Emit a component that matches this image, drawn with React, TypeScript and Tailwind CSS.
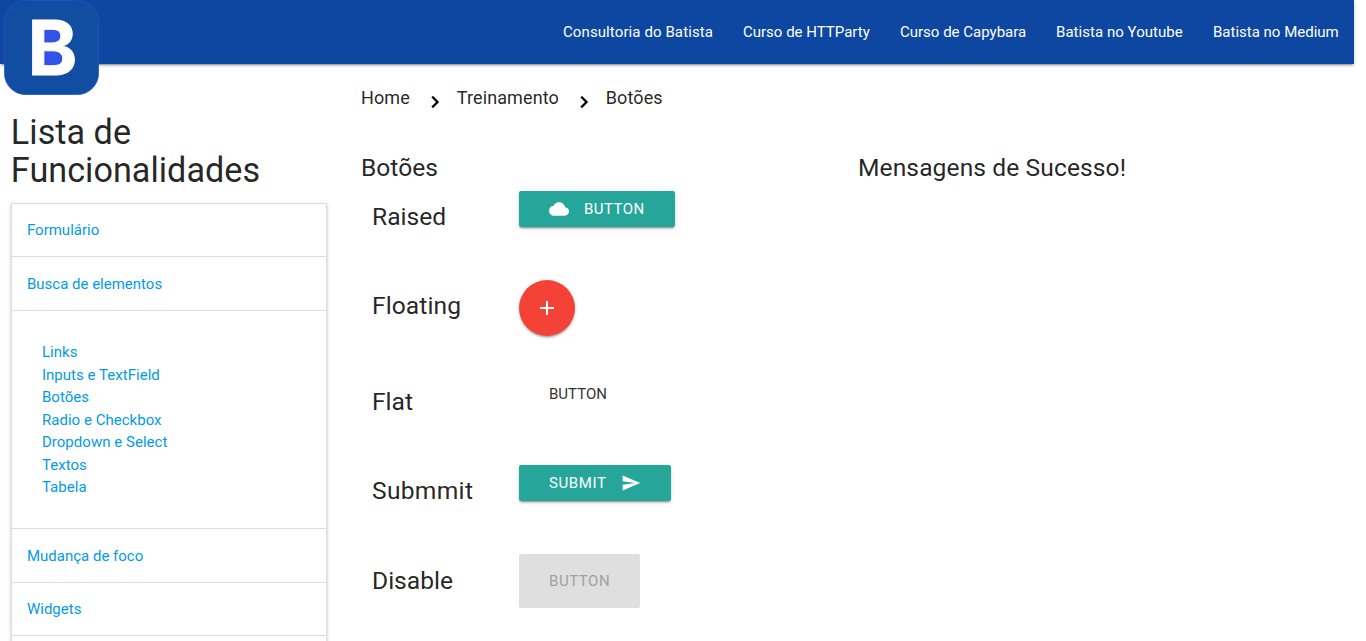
import type { ReactNode } from "react";

const navLinks = [
  { text: "Consultoria do Batista", className: "w-[180px] tracking-[0.1px]" },
  { text: "Curso de HTTParty", className: "w-[157px]" },
  { text: "Curso de Capybara", className: "w-[156px]" },
  { text: "Batista no Youtube", className: "w-[157px] tracking-[0.04px]" },
  { text: "Batista no Medium", className: "w-[156px]" },
];

const subLinks = [
  "Links",
  "Inputs e TextField",
  "Botões",
  "Radio e Checkbox",
  "Dropdown e Select",
  "Textos",
  "Tabela",
];

const raised =
  "shadow-[0_2px_2px_0_rgba(0,0,0,0.14),0_1px_5px_0_rgba(0,0,0,0.12),0_3px_1px_-2px_rgba(0,0,0,0.2)]";

function Icon({ d, className }: { d: string; className: string }) {
  return (
    <svg viewBox="0 0 24 24" fill="currentColor" className={className}>
      <path d={d} />
    </svg>
  );
}

function Logo() {
  return (
    <svg viewBox="0 0 95 95" className="absolute left-1 top-0 h-[95px] w-[95px]">
      <rect x="0.5" y="0.5" width="94" height="94" rx="21" fill="#114da1" stroke="#2a4fd2" strokeWidth="0.8" />
      <rect x="36" y="26" width="24" height="42" fill="#3352e6" />
      <text
        x="23.7"
        y="74.8"
        fontFamily="Inter, sans-serif"
        fontWeight="700"
        fontSize="75.6"
        textLength="49.5"
        lengthAdjust="spacingAndGlyphs"
        fill="#fff"
        stroke="#fff"
        strokeWidth="1"
      >
        B
      </text>
    </svg>
  );
}

function Header({ children }: { children: ReactNode }) {
  return (
    <li className="border-b border-[#ddd] pt-[15.5px] pr-[15px] pb-[14.5px] pl-[14.7px] text-[15px] leading-[22.5px]">
      <a href="#">{children}</a>
    </li>
  );
}

function Crumb({ children }: { children: ReactNode }) {
  return <a href="#" className="text-lg leading-[27px] tracking-[0.12px]">{children}</a>;
}

function Chevron() {
  return (
    <Icon
      d="M10 6L8.59 7.41 13.17 12l-4.58 4.59L10 18l6-6z"
      className="mt-[6px] mr-[9.8px] ml-[13px] size-6 stroke-black stroke-[0.3] text-black"
    />
  );
}

function Row({
  label,
  height,
  labelClass = "pt-[12.3px]",
  children,
}: {
  label: string;
  height: string;
  labelClass?: string;
  children: ReactNode;
}) {
  return (
    <div className={`flex items-start ${height}`}>
      <h5 className={`w-[147px] text-[24.6px] leading-[27.06px] ${labelClass}`}>{label}</h5>
      {children}
    </div>
  );
}

export default function App() {
  return (
    <div className="h-[641px] w-[1354px] overflow-clip bg-white font-['Roboto',sans-serif] text-[15px] text-[rgba(0,0,0,0.87)] [overflow-clip-margin:12px]">
      <nav className={`relative flex h-16 items-center justify-end bg-[#0d47a1] text-white ${raised}`}>
        <Logo />
        {navLinks.map((link) => (
          <a key={link.text} href="#" className={`px-[15px] leading-[64px] whitespace-nowrap ${link.className}`}>
            {link.text}
          </a>
        ))}
      </nav>

      <div className="flex">
        <aside className="w-[338.5px] shrink-0 px-[11.25px] pt-[50px]">
          <h4 className="-ml-[0.4px] text-[34.2px] leading-[37.62px] tracking-[0.02px]">
            Lista de
            <br />
            Funcionalidades
          </h4>
          <ul className={`mt-[13.4px] border border-b-0 border-[#ddd] text-[#039be5] ${raised}`}>
            <Header>Formulário</Header>
            <Header>Busca de elementos</Header>
            <li className="flex flex-col border-b border-[#ddd] pt-[30.4px] pr-[30px] pb-[29.6px] pl-[29.7px] leading-[22.5px] tracking-[0.03px]">
              {subLinks.map((link) => (
                <a key={link} href="#">
                  {link}
                </a>
              ))}
            </li>
            <Header>Mudança de foco</Header>
            <Header>Widgets</Header>
            <li className="h-4" />
          </ul>
        </aside>

        <main className="flex-1 pl-[22.5px]">
          <div className="flex h-[90px] items-start pt-5">
            <Crumb>Home</Crumb>
            <Chevron />
            <Crumb>Treinamento</Crumb>
            <Chevron />
            <Crumb>Botões</Crumb>
          </div>

          <div className="flex">
            <section className="w-[497px]">
              <h5 className="h-[37px] text-[24.6px] leading-[27.06px]">Botões</h5>
              <div className="pl-[11px]">
                <Row label="Raised" height="h-[89px]">
                  <button className={`flex h-9 w-[156px] items-center rounded-[2px] bg-[#26a69a] pl-[30px] tracking-[0.45px] text-white ${raised}`}>
                    <Icon
                      d="M19.35 10.04C18.67 6.59 15.64 4 12 4 9.11 4 6.6 5.64 5.35 8.04 2.34 8.36 0 10.91 0 14c0 3.31 2.69 6 6 6h13c2.76 0 5-2.24 5-5 0-2.64-2.05-4.78-4.65-4.96z"
                      className="mt-[0.8px] mr-[15px] size-[20px]"
                    />
                    BUTTON
                  </button>
                </Row>
                <Row label="Floating" height="h-[96px]" labelClass="pt-[12.3px] tracking-[0.08px]">
                  <button className={`flex size-14 items-center justify-center rounded-full bg-[#f44336] text-white ${raised}`}>
                    <Icon d="M19 13h-6v6h-2v-6H5v-2h6V5h2v6h6v2z" className="size-6" />
                  </button>
                </Row>
                <Row label="Flat" height="h-[89px]">
                  <button className="h-9 px-[30px] text-[#343434]">BUTTON</button>
                </Row>
                <Row label="Submmit" height="h-[89px]" labelClass="pt-[12.3px] tracking-[0.3px]">
                  <button className={`flex h-9 w-[152px] items-center rounded-[2px] bg-[#26a69a] pl-[30px] tracking-[0.6px] text-white ${raised}`}>
                    <span className="w-[72px] text-left">SUBMIT</span>
                    <Icon d="M2.01 21L23 12 2.01 3 2 10l15 2-15 2z" className="mt-[0.8px] size-[20px]" />
                  </button>
                </Row>
                <Row label="Disable" height="h-[89px]" labelClass="pt-[13px]">
                  <button disabled className="h-[54px] w-[121px] rounded-[2px] bg-[#dfdfdf] pl-[30px] text-left tracking-[0.55px] text-[#9f9f9f]">
                    BUTTON
                  </button>
                </Row>
              </div>
            </section>
            <h5 className="text-[24.6px] leading-[27.06px] tracking-[0.09px]">Mensagens de Sucesso!</h5>
          </div>
        </main>
      </div>
    </div>
  );
}
